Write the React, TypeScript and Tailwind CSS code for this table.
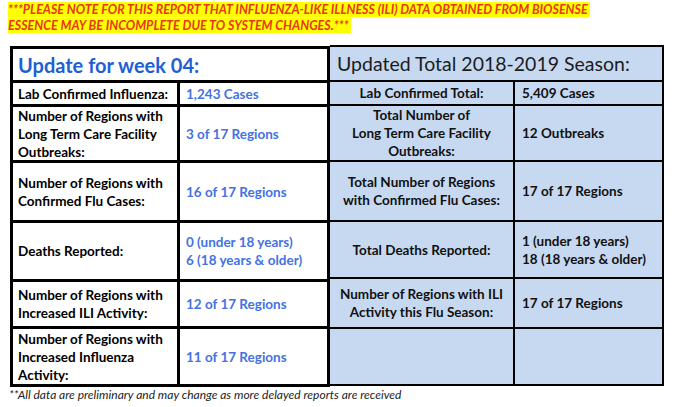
import React from 'react';

const font = { fontFamily: 'Lato, "Open Sans", sans-serif' };

type Row = { label: string[]; value: string[]; h: string; rh: string; rLabel: string[]; rValue: string[] };

const rows: Row[] = [
  { label: ['Lab Confirmed Influenza:'], value: ['1,243 Cases'], h: 'h-[21px]', rh: 'h-[22px]', rLabel: ['Lab Confirmed Total:'], rValue: ['5,409 Cases'] },
  {
    label: ['Number of Regions with', 'Long Term Care Facility', 'Outbreaks:'],
    value: ['3 of 17 Regions'],
    h: 'h-[53px]',
    rh: 'h-[54px]',
    rLabel: ['Total Number of', 'Long Term Care Facility', 'Outbreaks:'],
    rValue: ['12 Outbreaks'],
  },
  {
    label: ['Number of Regions with', 'Confirmed Flu Cases:'],
    value: ['16 of 17 Regions'],
    h: 'h-[57px]',
    rh: 'h-[58px]',
    rLabel: ['Total Number of Regions', 'with Confirmed Flu Cases:'],
    rValue: ['17 of 17 Regions'],
  },
  {
    label: ['Deaths Reported:'],
    value: ['0 (under 18 years)', '6 (18 years & older)'],
    h: 'h-[56px]',
    rh: 'h-[55px]',
    rLabel: ['Total Deaths Reported:'],
    rValue: ['1 (under 18 years)', '18 (18 years & older)'],
  },
  {
    label: ['Number of Regions with', 'Increased ILI Activity:'],
    value: ['12 of 17 Regions'],
    h: 'h-[44px]',
    rh: 'h-[48px]',
    rLabel: ['Number of Regions with ILI', 'Activity this Flu Season:'],
    rValue: ['17 of 17 Regions'],
  },
  {
    label: ['Number of Regions with', 'Increased Influenza', 'Activity:'],
    value: ['11 of 17 Regions'],
    h: 'h-[55px]',
    rh: 'h-[55px]',
    rLabel: [],
    rValue: [],
  },
];

const Lines = ({ lines }: { lines: string[] }) => (
  <>
    {lines.map((l, i) => (
      <div key={i}>{l}</div>
    ))}
  </>
);

export default function App() {
  return (
    <div className="w-[679px] h-[407px] bg-white overflow-hidden" style={font}>
      {/* highlighted notice */}
      <div className="pl-[8px] pt-[2px] text-[12.5px] leading-[16px] font-bold italic text-[#e8381c]">
        <div>
          <span className="bg-[#ffff00] pr-[2px]">
            ***PLEASE NOTE FOR THIS REPORT THAT INFLUENZA-LIKE ILLNESS (ILI) DATA OBTAINED FROM BIOSENSE
          </span>
        </div>
        <div>
          <span className="bg-[#ffff00] pr-[2px]">ESSENCE MAY BE INCOMPLETE DUE TO SYSTEM CHANGES.***</span>
        </div>
      </div>

      <div className="flex items-start pl-[10px] mt-[11px]">
        {/* weekly table */}
        <div className="mt-px w-[320px] bg-black p-[3px] grid grid-cols-[164px_147px] gap-[3px]">
          <div className="col-span-2 h-[31px] bg-white pl-[5px] flex items-center text-[20px] font-bold text-[#1f5fd6]">
            Update for week 04:
          </div>
          {rows.map((r, i) => (
            <React.Fragment key={i}>
              <div className={`${r.h} bg-white pl-[5px] flex flex-col justify-center text-[13.5px] leading-[18px] font-bold text-black`}>
                <Lines lines={r.label} />
              </div>
              <div className={`${r.h} bg-white pl-[6px] flex flex-col justify-center text-[13.5px] leading-[18px] font-bold text-[#4472e0]`}>
                <Lines lines={r.value} />
              </div>
            </React.Fragment>
          ))}
        </div>

        {/* season table */}
        <div className="w-[334px] bg-black pt-[2px] pr-[2px] pb-[2px] grid grid-cols-[183px_147px] gap-[2px]">
          <div className="col-span-2 h-[33px] bg-[#c6d9f1] pl-[7px] flex items-center text-[19.5px] text-[#1c1c1c]">
            Updated Total 2018-2019 Season:
          </div>
          {rows.map((r, i) => (
            <React.Fragment key={i}>
              <div className={`${r.rh} bg-[#c6d9f1] flex flex-col justify-center items-center text-center text-[13.5px] leading-[18px] font-bold text-[#111]`}>
                <Lines lines={r.rLabel} />
              </div>
              <div className={`${r.rh} bg-[#c6d9f1] pl-[7px] flex flex-col justify-center text-[13.5px] leading-[18px] font-bold text-[#111]`}>
                <Lines lines={r.rValue} />
              </div>
            </React.Fragment>
          ))}
        </div>
      </div>

      <div className="pl-[9px] mt-[1px] text-[12px] leading-[14px] italic text-[#222]">
        **All data are preliminary and may change as more delayed reports are received
      </div>
    </div>
  );
}
